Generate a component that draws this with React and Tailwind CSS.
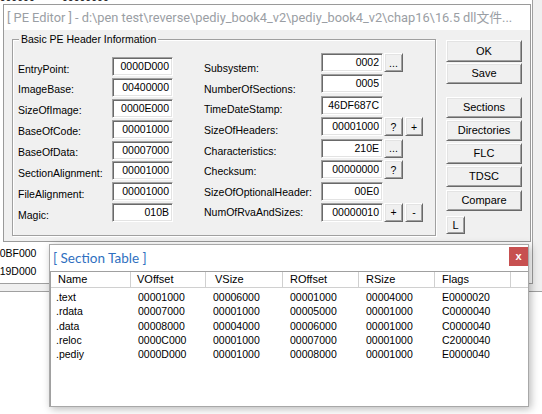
const TITLE = "[ PE Editor ] - d:\\pen test\\reverse\\pediy_book4_v2\\pediy_book4_v2\\chap16\\16.5 dll文件...";

const leftFields = [
  ["EntryPoint:", "0000D000"],
  ["ImageBase:", "00400000"],
  ["SizeOfImage:", "0000E000"],
  ["BaseOfCode:", "00001000"],
  ["BaseOfData:", "00007000"],
  ["SectionAlignment:", "00001000"],
  ["FileAlignment:", "00001000"],
  ["Magic:", "010B"],
];

const rightFields = [
  ["Subsystem:", "0002", ["..."]],
  ["NumberOfSections:", "0005", []],
  ["TimeDateStamp:", "46DF687C", []],
  ["SizeOfHeaders:", "00001000", ["?", "+"]],
  ["Characteristics:", "210E", ["..."]],
  ["Checksum:", "00000000", ["?"]],
  ["SizeOfOptionalHeader:", "00E0", []],
  ["NumOfRvaAndSizes:", "00000010", ["+", "-"]],
];

const sections = [
  [".text", "00001000", "00006000", "00001000", "00004000", "E0000020"],
  [".rdata", "00007000", "00001000", "00005000", "00001000", "C0000040"],
  [".data", "00008000", "00004000", "00006000", "00001000", "C0000040"],
  [".reloc", "0000C000", "00001000", "00007000", "00001000", "C2000040"],
  [".pediy", "0000D000", "00001000", "00008000", "00001000", "E0000040"],
];

const colW = [80, 75, 77, 76, 76, 76];
const headPad = [7, 6, 9, 7, 7, 7];
const dataPad = [5, 7, 7, 7, 7, 7];
const heads = ["Name", "VOffset", "VSize", "ROffset", "RSize", "Flags"];

function Edit({ value, w }) {
  return (
    <div
      className="h-[19px] bg-white border-t border-l border-t-[#a0a0a0] border-l-[#a0a0a0] border-b border-r border-b-white border-r-white shadow-[inset_1px_1px_0_#696969,inset_-1px_-1px_0_#e3e3e3] text-right pr-[3px] leading-[17px]"
      style={{ width: w }}
    >
      {value}
    </div>
  );
}

function Btn({ children, className }) {
  return (
    <div
      className={
        "flex items-center justify-center bg-[#f0f0f0] border border-t-white border-l-white border-b-[#696969] border-r-[#696969] shadow-[inset_1px_1px_0_#e3e3e3,inset_-1px_-1px_0_#a0a0a0] " +
        className
      }
    >
      {children}
    </div>
  );
}

export default function App() {
  return (
    <div className="relative w-[542px] h-[414px] overflow-hidden bg-white font-['Liberation_Sans',Arial,sans-serif] text-[10.5px] text-black">
      {/* background window */}
      <div className="w-[542px] h-[292px] bg-[#f0f0f0] border-b border-[#a0a0a0]">
        <div className="w-[533px] h-[284px] bg-white border-r border-b border-[#a0a0a0] overflow-hidden">
          <div className="-ml-[12px] flex flex-col leading-[18px] text-[10.5px]">
            <div className="-mt-[12px] flex">
              <span className="w-[74px]">00000000</span>
              <span>00000000</span>
            </div>
            <div className="h-[238px]"></div>
            <div>000BF000</div>
            <div>0019D000</div>
          </div>
        </div>
      </div>

      {/* PE Editor window */}
      <div className="absolute left-[3px] top-[4px] w-[528px] h-[238px] border border-[#9a9a9a] bg-[#f0f0f0] flex flex-col">
        <div className="h-[25px] bg-white flex items-center pl-[3px] whitespace-nowrap overflow-hidden font-['Roboto','Noto_Sans_CJK_SC',sans-serif] text-[12.8px] text-[#9a9ea4]">
          {TITLE}
        </div>
        <div className="flex pl-[8px] pt-[9px]">
          {/* group box */}
          <div className="relative w-[424px] h-[197px] border border-[#a0a0a0] shadow-[inset_1px_1px_0_#fff,1px_1px_0_#fff] flex pl-[5px]">
            <span className="absolute left-[6px] top-[-8px] px-[2px] bg-[#f0f0f0] leading-[14px]">
              Basic PE Header Information
            </span>
            <div className="w-[94px] pt-[18.5px] flex flex-col leading-[20.9px]">
              {leftFields.map(([l]) => (
                <div key={l}>{l}</div>
              ))}
            </div>
            <div className="w-[92px] pt-[17px] flex flex-col">
              {leftFields.map(([l, v]) => (
                <div key={l} className="h-[20.9px]">
                  <Edit value={v} w={61} />
                </div>
              ))}
            </div>
            <div className="w-[117px] pt-[18.2px] flex flex-col leading-[20.6px]">
              {rightFields.map(([l]) => (
                <div key={l}>{l}</div>
              ))}
            </div>
            <div className="pt-[13px] flex flex-col">
              {rightFields.map(([l, v, bs]) => (
                <div key={l} className="h-[21.43px] flex">
                  <Edit value={v} w={62} />
                  {bs.map((b, i) => (
                    <Btn
                      key={i}
                      className={
                        i === 0
                          ? "ml-[1px] w-[19px] h-[19px] leading-[12px]"
                          : "ml-[2px] w-[18px] h-[19px] leading-[12px]"
                      }
                    >
                      {b}
                    </Btn>
                  ))}
                </div>
              ))}
            </div>
          </div>

          {/* buttons column */}
          <div className="ml-[10px] mt-[1px] w-[76px] flex flex-col text-[11px]">
            <Btn className="h-[22px]">OK</Btn>
            <Btn className="mt-[1px] h-[21px]">Save</Btn>
            <Btn className="mt-[13px] h-[21px]">Sections</Btn>
            <Btn className="mt-[2px] h-[21px]">Directories</Btn>
            <Btn className="mt-[2px] h-[21px]">FLC</Btn>
            <Btn className="mt-[2px] h-[21px]">TDSC</Btn>
            <Btn className="mt-[3px] h-[21px]">Compare</Btn>
            <Btn className="mt-[5px] h-[18px] w-[19px]">L</Btn>
          </div>
        </div>
      </div>

      {/* Section Table window */}
      <div className="absolute left-[49px] top-[244px] w-[480px] h-[163px] border border-[#a8a8a8] bg-white flex flex-col shadow-[2px_2px_8px_rgba(0,0,0,0.28)]">
        <div className="h-[26px] flex justify-between">
          <div className="pl-[3px] flex items-center font-['Lato',sans-serif] text-[13.5px] text-[#2f6fc0]">
            [ Section Table ]
          </div>
          <div className="mt-[2px] w-[19px] h-[19px] bg-[#c75050] text-white flex items-center justify-center font-bold text-[11px] leading-none">
            x
          </div>
        </div>
        <div className="flex-1 border-t border-l border-[#a0a0a0] bg-white flex flex-col">
          <div className="flex h-[16px] border-b border-[#d0d0d0] bg-white text-[11px]">
            {heads.map((h, i) => (
              <div
                key={h}
                className="border-r border-[#d0d0d0] leading-[15px]"
                style={{ width: colW[i], paddingLeft: headPad[i] }}
              >
                {h}
              </div>
            ))}
            <div className="flex-1"></div>
          </div>
          <div className="pt-[2px] flex flex-col">
            {sections.map((row) => (
              <div key={row[0]} className="flex h-[14.25px] leading-[14.25px]">
                {row.map((c, i) => (
                  <div key={i} style={{ width: colW[i], paddingLeft: dataPad[i] }}>
                    {c}
                  </div>
                ))}
              </div>
            ))}
          </div>
        </div>
      </div>
    </div>
  );
}
